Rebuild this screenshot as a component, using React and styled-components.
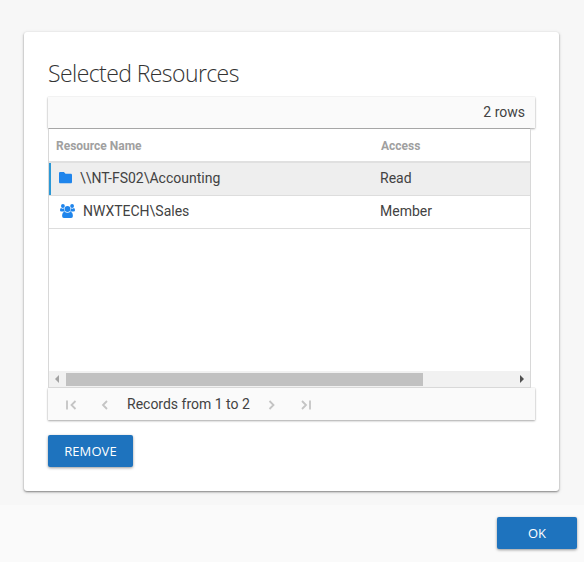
import React from 'react';
import styled, { createGlobalStyle } from 'styled-components';

const Global = createGlobalStyle`
  * { box-sizing: border-box; }
  body { margin: 0; background: #fafafa; font-family: Roboto, sans-serif; color: #424242; }
`;
const Dialog = styled.div`
  height: 562px;
  display: flex;
  flex-direction: column;
  overflow: hidden;
`;
const Content = styled.main`
  height: 505px;
  padding: 32px 25px 14px 24px;
  background: #f7f7f7;
`;
const Card = styled.section`
  height: 459px;
  padding: 24px 24px 0;
  background: #fff;
  border-radius: 3px;
  box-shadow: 0 1px 2px rgba(0,0,0,.42), 0 1px 4px rgba(0,0,0,.12);
`;
const Title = styled.h1`
  margin: 0;
  height: 41px;
  font: 300 23px/35px "Open Sans", sans-serif;
  letter-spacing: -0.58px;
  color: #333;
  white-space: nowrap;
`;
const Bar = styled.div`
  display: flex;
  align-items: center;
  height: 32px;
  background: #fafafa;
  font-size: 14px;
  box-shadow: 0 1px 2px rgba(0,0,0,.32), 0 0 1px rgba(0,0,0,.16);
`;
const CountBar = styled(Bar)`
  height: 31px;
  justify-content: flex-end;
  padding: 0 10px 1px 0;
`;
const Table = styled.div`
  position: relative;
  width: 483px;
  height: 260px;
  display: flex;
  flex-direction: column;
  background: #fff;
  border: 1px solid #d8d8d8;
  border-top-color: #a6a6a6;
`;
const Row = styled.div`
  display: grid;
  grid-template-columns: 331px 1fr;
  align-items: center;
  height: 33px;
  padding-bottom: 2px;
  border-bottom: 1px solid #ddd;
  background: ${p => (p.$selected ? '#eee' : '#fff')};
  box-shadow: ${p => (p.$selected ? 'inset 2px 0 #2c98d5' : 'none')};
  font-size: 14px;
`;
const HeaderRow = styled(Row)`
  height: 34px;
  padding: 2px 0 0;
  border-bottom: 2px solid #e0e0e0;
  font-size: 12px;
  font-weight: 700;
  color: #a0a0a0;
  & > span:first-child { padding-left: 7px; }
  & > span:last-child { padding-left: 1px; }
`;
const NameCell = styled.span`
  display: flex;
  align-items: center;
  gap: ${p => p.$gap}px;
  padding-left: ${p => p.$inset}px;
`;
const Icon = styled.svg`
  display: block;
  flex: none;
  fill: ${p => p.$fill || '#1f85ec'};
`;
const Scrollbar = styled.div`
  display: flex;
  align-items: center;
  height: 16px;
  margin-top: auto;
  background: #f1f1f1;
`;
const Arrow = styled.span`
  width: 17px;
  display: flex;
  justify-content: center;
  padding-right: ${p => p.$shift || 0}px;
`;
const Thumb = styled.span`
  width: 357px;
  height: 13px;
  margin-right: auto;
  background: #c1c1c1;
`;
const Pager = styled(Bar)`
  padding-left: 17px;
`;
const PageIcon = styled.svg`
  flex: none;
  margin-top: 2px;
  fill: none;
  stroke: #c4c4c4;
  stroke-width: 1.8;
  margin-right: ${p => p.$after}px;
`;
const Records = styled.span`
  width: 140px;
`;
const Button = styled.button`
  display: flex;
  align-items: center;
  justify-content: center;
  width: ${p => p.$width}px;
  height: 32px;
  padding: 0;
  border: 0;
  border-radius: 2px;
  background: #1e73be;
  color: #fff;
  font: 400 13px "Open Sans", sans-serif;
  letter-spacing: ${p => p.$tracking || 0}px;
  box-shadow: 0 1px 3px rgba(0,0,0,.4);
`;
const CardActions = styled.div`
  padding-top: 15px;
`;
const Footer = styled.footer`
  display: flex;
  justify-content: flex-end;
  padding: 12px 7px 0 0;
`;

const Folder = () => (
  <Icon width="13" height="12" viewBox="0 0 13 12">
    <path d="M1.300 0h3.600l1.600 1.700h5.200c.7 0 1.300.5 1.300 1.200v7c0 .7-.5 1.300-1.300 1.300H1.300C.5 11.200 0 10.600 0 9.900V1.300C0 .5.5 0 1.300 0Z" />
  </Icon>
);
const Group = () => (
  <Icon width="15" height="14" viewBox="0 0 15 14">
    <circle cx="2.900" cy="2" r="1.900" />
    <circle cx="12.100" cy="2" r="1.900" />
    <circle cx="7.500" cy="5" r="2.900" />
    <path d="M1 4.100q1.600 1.100 3.100.2-.2 1.800 1 3.100H1.300Q0 7.400 0 6.200q0-1.700 1-2.100zM14 4.100q-1.600 1.100-3.100.2.2 1.800-1 3.100h3.800q1.300 0 1.300-1.200 0-1.700-1-2.100zM4.500 7.700q3 1.900 6 0 2.400.6 2.400 4.300 0 2-1.800 2H3.900q-1.800 0-1.800-2 0-3.700 2.400-4.300z" />
  </Icon>
);

export default function App() {
  return (
    <>
      <Global />
      <Dialog>
        <Content>
          <Card>
            <Title>Selected Resources</Title>
            <CountBar>2 rows</CountBar>
            <Table>
              <HeaderRow><span>Resource Name</span><span>Access</span></HeaderRow>
              <Row $selected>
                <NameCell $inset={10} $gap={8}><Folder />\\NT-FS02\Accounting</NameCell>
                <span>Read</span>
              </Row>
              <Row>
                <NameCell $inset={11} $gap={8}><Group />NWXTECH\Sales</NameCell>
                <span>Member</span>
              </Row>
              <Scrollbar>
                <Arrow $shift={2}><Icon $fill="#a3a3a3" width="4" height="8"><path d="M4 0v8L0 4z" /></Icon></Arrow>
                <Thumb />
                <Arrow><Icon $fill="#505050" width="4" height="8"><path d="M0 0v8l4-4z" /></Icon></Arrow>
              </Scrollbar>
            </Table>
            <Pager>
              <PageIcon $after={24} width="12" height="10"><path d="M2 0.500v9M10.500 1 6.500 5l4 4" /></PageIcon>
              <PageIcon $after={18} width="8" height="10"><path d="M6 1 2 5l4 4" /></PageIcon>
              <Records>Records from 1 to 2</Records>
              <PageIcon $after={25} width="8" height="10"><path d="m2.500 1 4 4-4 4" /></PageIcon>
              <PageIcon $after={0} width="12" height="10"><path d="m2 1 4 4-4 4M10 0.500v9" /></PageIcon>
            </Pager>
            <CardActions><Button $width={85} $tracking={0.1}>REMOVE</Button></CardActions>
          </Card>
        </Content>
        <Footer><Button $width={80}>OK</Button></Footer>
      </Dialog>
    </>
  );
}
